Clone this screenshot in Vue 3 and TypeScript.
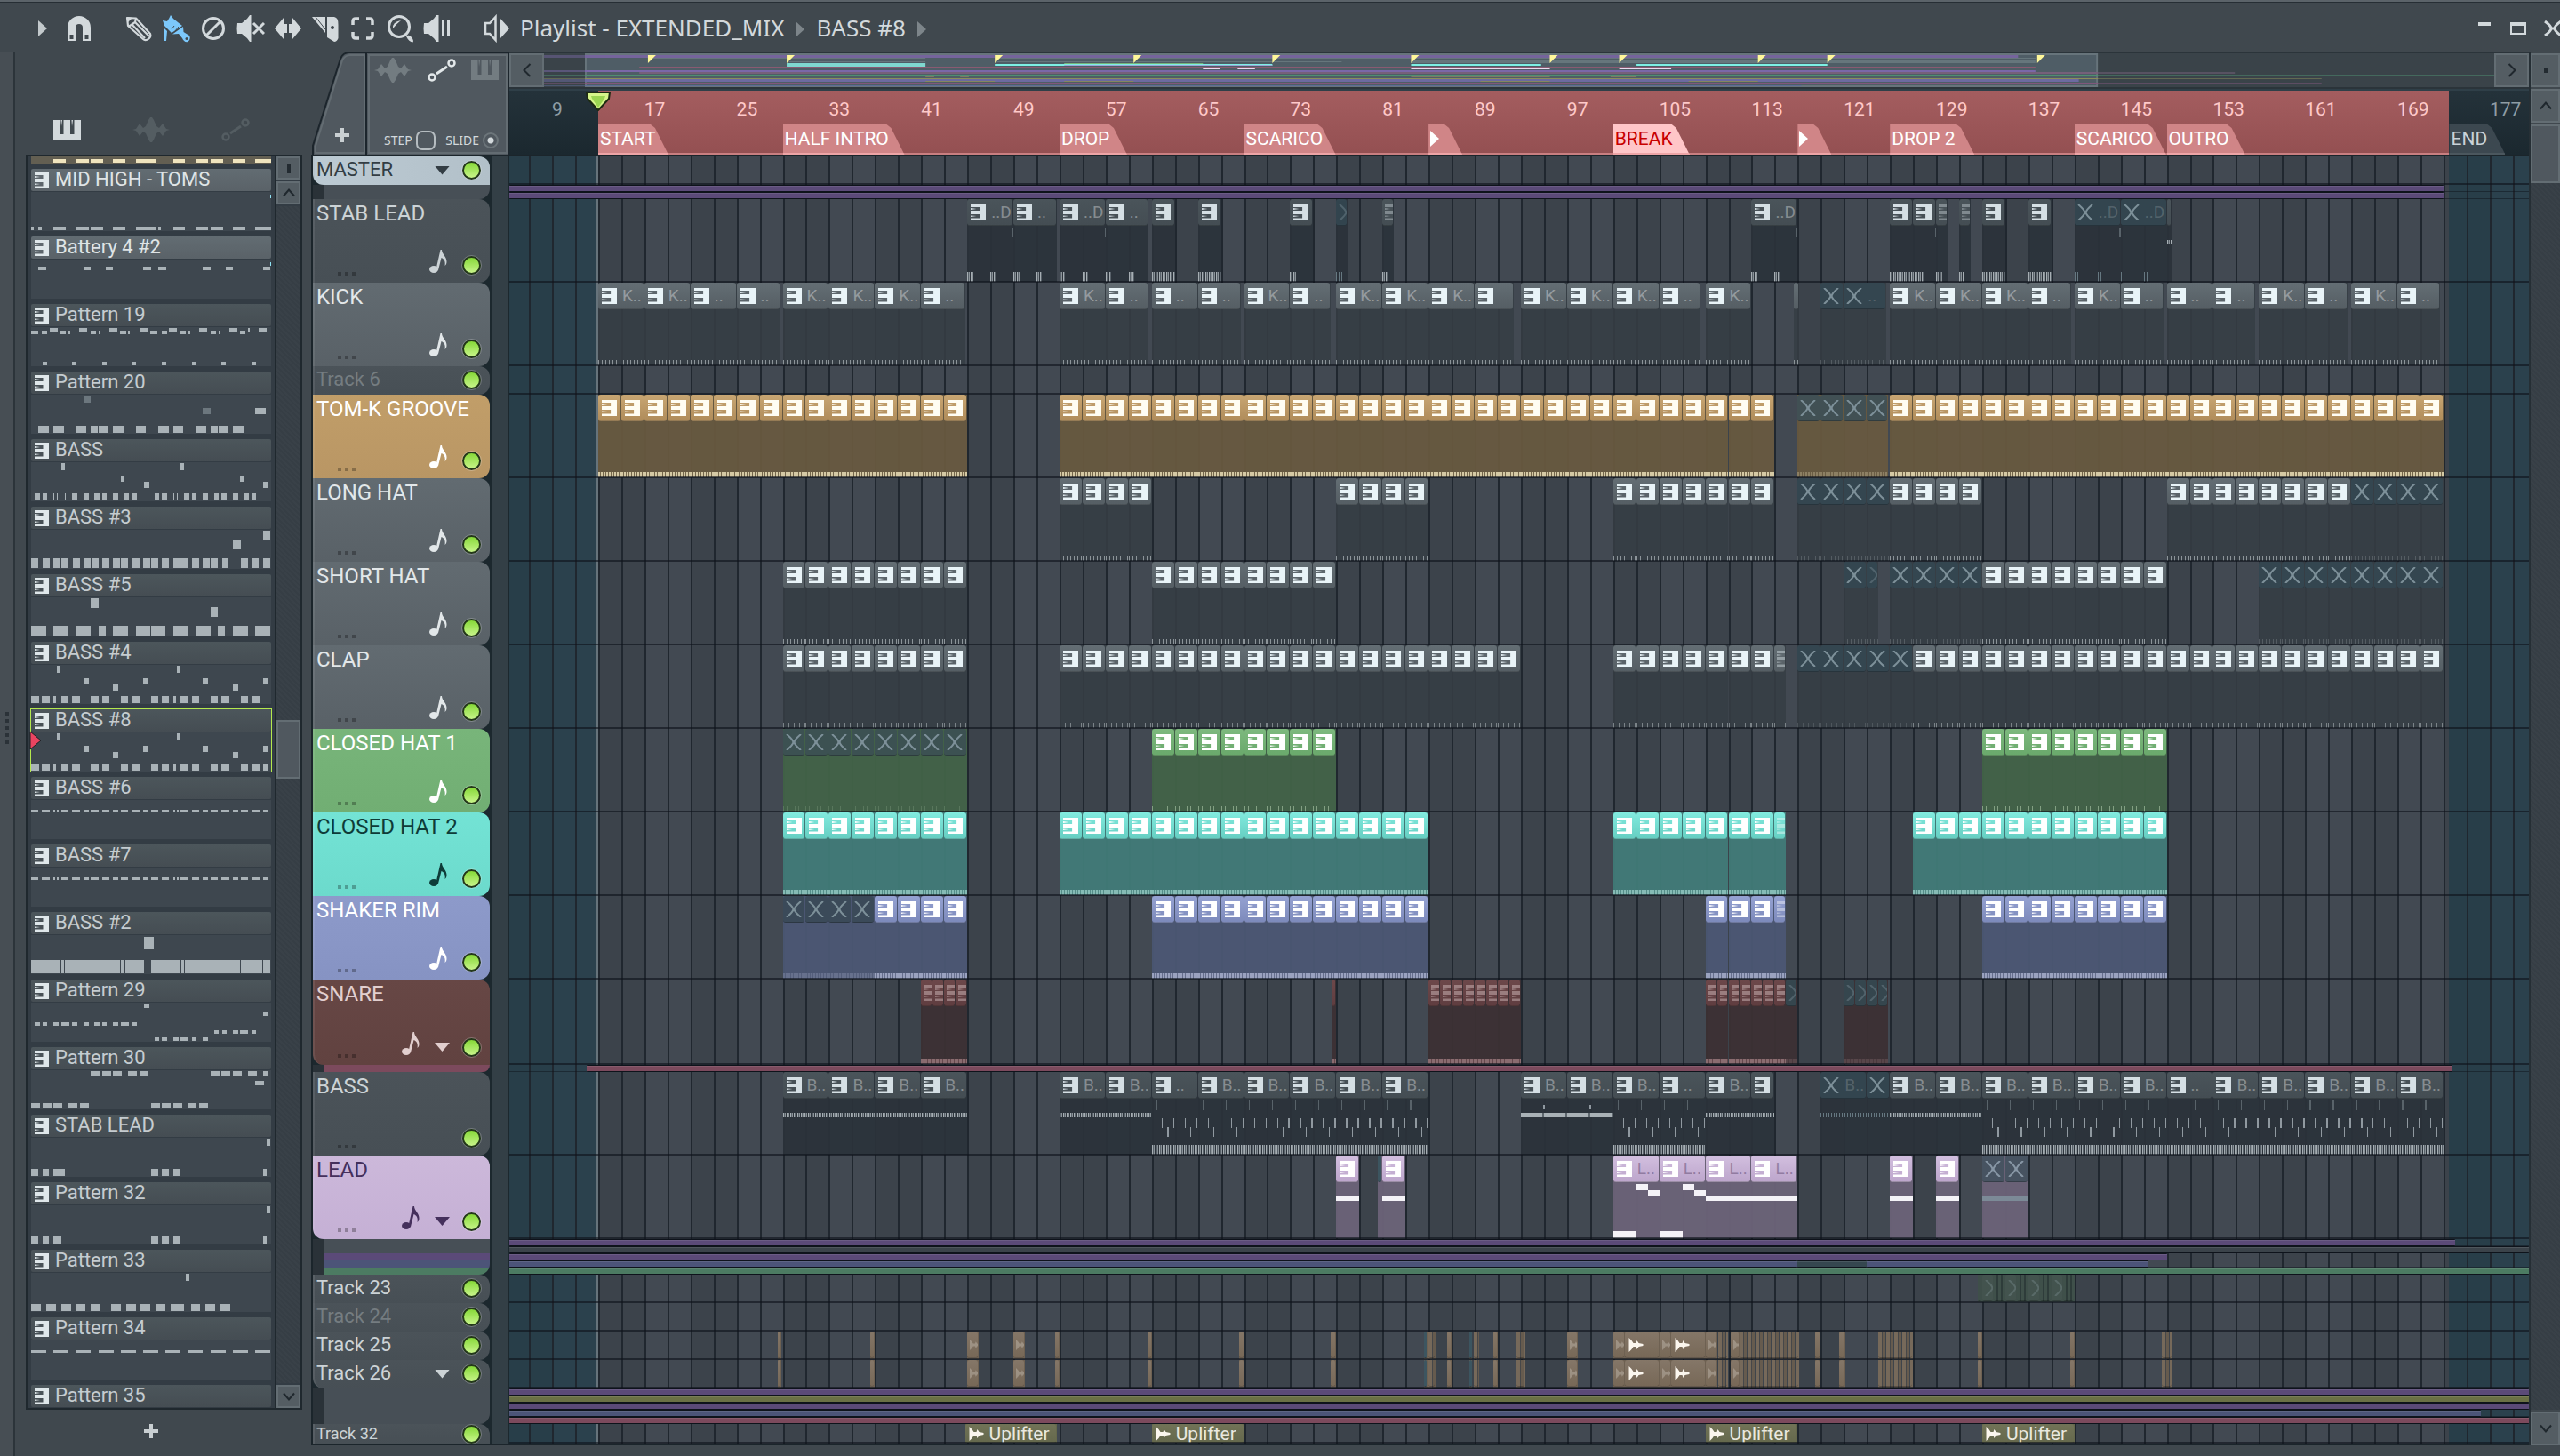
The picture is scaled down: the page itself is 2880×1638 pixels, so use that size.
<script setup lang="ts">
type Run = [start: number, end: number, step: number, kind: string, label?: string]
type Mark = [start: number, end: number, top: number, height: number, tone: string]
type Segment = [start: number, end: number, tone: string]

interface SubLane {
  tone: string
  segments: Segment[]
}

interface Track {
  name: string
  height: number
  theme: string
  dim?: boolean
  small?: boolean
  note?: boolean
  fold?: boolean
  runs?: Run[]
  marks?: Mark[]
  subs?: SubLane[]
}

interface Clip {
  start: number
  end: number
  kind: string
  label: string
}

const FIRST_BAR = 5.3
const BAR_SPAN = 175.1
const LAST_BAR = FIRST_BAR + BAR_SPAN

const at = (bar: number): string => `${((bar - FIRST_BAR) / BAR_SPAN) * 100}%`
const wide = (bars: number): string => `${(bars / BAR_SPAN) * 100}%`

function expand(runs: Run[] = []): Clip[] {
  const clips: Clip[] = []
  for (const [start, end, step, kind, label] of runs) {
    const size = step || end - start
    for (let b = start; b < end - 0.01; b += size) {
      clips.push({ start: b, end: Math.min(b + size, end), kind, label: label ?? '' })
    }
  }
  return clips
}

function bassRiff(start: number, end: number): Mark[] {
  const marks: Mark[] = [[start, end, 82, 11, 'comb']]
  for (let b = start; b < end; b += 2) {
    marks.push([b + 0.4, b + 0.5, 32, 11, 'faint'])
    marks.push([b + 0.85, b + 0.95, 52, 11, 'tick'])
    marks.push([b + 1.35, b + 1.45, 62, 11, 'tick'])
    marks.push([b + 1.85, b + 1.95, 52, 11, 'tick'])
  }
  return marks
}

function stabs(bars: number[], tone = 'comb'): Mark[] {
  return bars.map((b): Mark => [b, b + 0.5, 82, 11, tone])
}

function leadRiff(b: number): Mark[] {
  return [
    [b, b + 2, 85, 8, 'solid'],
    [b + 2, b + 3, 32, 7, 'solid'],
    [b + 3, b + 4, 39, 7, 'solid'],
  ]
}

const full = (tone: string): SubLane => ({ tone, segments: [[FIRST_BAR, LAST_BAR, tone]] })

const hits: Run[] = [
  [28.6, 28.9, 0, 's'], [36.6, 37, 0, 's'], [45, 46, 0, 'w'], [49, 50, 0, 'w'], [52.6, 53, 0, 's'],
  [60.6, 61, 0, 's'], [68.6, 69, 0, 's'], [76.5, 77, 0, 's'], [84.6, 84.9, 0, 'm'], [85, 85.6, 0, 't'],
  [86.6, 87, 0, 's'], [88.5, 88.8, 0, 'm'], [88.9, 89.4, 0, 't'], [90.6, 91, 0, 's'],
  [92.6, 93.4, 0, 't'], [97, 97.9, 0, 'w'], [101, 102, 0, 'w'], [102, 105, 0, 'a'], [105, 106, 0, 'w'],
  [106, 109, 0, 'a'], [109, 110, 0, 'w'], [110.1, 111, 0, 't'], [111.2, 112, 0, 'w'], [112, 117.1, 0, 't'],
  [118.5, 119, 0, 's'], [120.6, 121.1, 0, 's'], [124, 127, 0, 't'], [132.6, 133, 0, 's'],
  [140.6, 141, 0, 's'], [148.6, 149.5, 0, 't'],
]

const tracks: Track[] = [
  {
    name: 'MASTER', height: 32, theme: 'silver', small: true, fold: true,
    subs: [
      { tone: 'plain', segments: [[FIRST_BAR, 173, 'violet']] },
      { tone: 'plain', segments: [[FIRST_BAR, 173, 'violet']] },
    ],
  },
  {
    name: 'STAB LEAD', height: 94, theme: 'slate', note: true,
    runs: [
      [45, 49, 0, 'k', '..D'], [49, 52.8, 0, 'k', '..'], [53, 57, 0, 'k', '..D'], [57, 60.7, 0, 'k', '..'],
      [61, 63, 0, 'k'], [65, 67, 0, 'k'], [73, 75, 0, 'k'], [77, 78, 0, 'x'], [81, 82, 0, 'k'],
      [113, 117, 0, 'k', '..D'], [125, 129, 2, 'k'], [129, 130, 0, 'k'], [131, 132, 0, 'k'],
      [133, 135, 0, 'k'], [137, 139, 0, 'k'], [141, 149, 4, 'x', '..D'], [149, 149.4, 0, 's'],
    ],
    marks: [
      ...stabs([45, 47, 49, 51, 53, 55, 57, 59, 73, 81, 113, 115, 129, 131]),
      ...stabs([77, 141, 143, 145, 147], 'combdim'),
      [61, 63, 82, 11, 'comb'], [65, 67, 82, 11, 'comb'], [125, 128, 82, 11, 'comb'],
      [133, 135, 82, 11, 'comb'], [137, 139, 82, 11, 'comb'], [149, 149.4, 46, 5, 'comb'],
      [48.9, 49, 32, 11, 'faint'], [56.9, 57, 32, 11, 'faint'], [116.9, 117, 32, 11, 'faint'],
      [128.9, 129, 32, 11, 'faint'], [136.9, 137, 32, 11, 'faint'], [144.9, 145, 32, 11, 'faint'],
    ],
  },
  {
    name: 'KICK', height: 94, theme: 'gray', note: true,
    runs: [
      [13, 21, 4, 'k', 'K..'], [21, 25, 0, 'k', '..'], [25, 28.8, 0, 'k', '..'], [29, 41, 4, 'k', 'K..'],
      [41, 44.8, 0, 'k', '..'], [53, 57, 0, 'k', 'K..'], [57, 60.7, 0, 'k', '..'], [61, 65, 0, 'k', '..'],
      [65, 68.7, 0, 'k', '..'], [69, 73, 0, 'k', 'K..'], [73, 76.5, 0, 'k', '..'], [77, 89, 4, 'k', 'K..'],
      [89, 92.4, 0, 'k'], [93, 105, 4, 'k', 'K..'], [105, 108.6, 0, 'k', '..'], [109, 113, 0, 'k', 'K..'],
      [116.7, 117.1, 0, 's'], [119, 121, 0, 'x'], [121, 124.7, 0, 'x', '..'], [125, 137, 4, 'k', 'K..'],
      [137, 140.7, 0, 'k', '..'], [141, 145, 0, 'k', 'K..'], [145, 148.7, 0, 'k', '..'], [149, 153, 0, 'k', '..'],
      [153, 156.7, 0, 'k', '..'], [157, 161, 0, 'k', 'K..'], [161, 164.7, 0, 'k', '..'],
      [165, 169, 0, 'k', 'K..'], [169, 172.7, 0, 'k', '..'],
    ],
  },
  { name: 'Track 6', height: 32, theme: 'slate', small: true, dim: true },
  {
    name: 'TOM-K GROOVE', height: 94, theme: 'gold', note: true,
    runs: [[13, 45, 2, 'k'], [53, 115, 2, 'k'], [117, 123, 2, 'x'], [123, 124.8, 0, 'x'], [125, 173, 2, 'k']],
  },
  {
    name: 'LONG HAT', height: 94, theme: 'gray', note: true,
    runs: [
      [53, 61, 2, 'k'], [77, 85, 2, 'k'], [101, 115, 2, 'k'], [117, 125, 2, 'x'], [125, 133, 2, 'k'],
      [149, 165, 2, 'k'], [165, 173, 2, 'x'],
    ],
  },
  {
    name: 'SHORT HAT', height: 94, theme: 'gray', note: true,
    runs: [
      [29, 45, 2, 'k'], [61, 77, 2, 'k'], [121, 123, 0, 'x'], [123, 124, 0, 'x'], [125, 133, 2, 'x'],
      [133, 149, 2, 'k'], [157, 173, 2, 'x'],
    ],
  },
  {
    name: 'CLAP', height: 94, theme: 'gray sparse', note: true,
    runs: [[29, 45, 2, 'k'], [53, 93, 2, 'k'], [101, 116, 2, 'k'], [117, 127, 2, 'x'], [127, 173, 2, 'k']],
  },
  {
    name: 'CLOSED HAT 1', height: 94, theme: 'green', note: true,
    runs: [[29, 45, 2, 'x'], [61, 77, 2, 'k'], [133, 149, 2, 'k']],
  },
  {
    name: 'CLOSED HAT 2', height: 94, theme: 'aqua', note: true,
    runs: [[29, 45, 2, 'k'], [53, 85, 2, 'k'], [101, 116, 2, 'k'], [127, 149, 2, 'k']],
  },
  {
    name: 'SHAKER RIM', height: 94, theme: 'indigo', note: true,
    runs: [[29, 37, 2, 'x'], [37, 45, 2, 'k'], [61, 85, 2, 'k'], [109, 116, 2, 'k'], [133, 149, 2, 'k']],
  },
  {
    name: 'SNARE', height: 96, theme: 'brick', note: true, fold: true,
    runs: [
      [41, 45, 1, 'k'], [76.6, 77, 0, 's'], [85, 93, 1, 'k'], [109, 116, 1, 'k'], [116, 117, 0, 'x'],
      [121, 124.8, 1, 'x'],
    ],
    subs: [{ tone: 'rose', segments: [[12, 173.8, 'rose']] }],
  },
  {
    name: 'BASS', height: 94, theme: 'slate',
    runs: [
      [29, 45, 4, 'k', 'B..'], [53, 61, 4, 'k', 'B..'], [61, 65, 0, 'k', '..'], [65, 85, 4, 'k', 'B..'],
      [93, 105, 4, 'k', 'B..'], [105, 109, 0, 'k', '..'], [109, 113, 0, 'k', 'B..'], [113, 115, 0, 'k'],
      [119, 123, 0, 'x', 'B..'], [123, 125, 0, 'x'], [125, 149, 4, 'k', 'B..'], [149, 153, 0, 'k', '..'],
      [153, 173, 4, 'k', 'B..'],
    ],
    marks: [
      [29, 45, 46, 5, 'comb'], [53, 61, 46, 5, 'comb'], [93, 101, 46, 5, 'dash'],
      [94.9, 95.1, 37, 5, 'tick'], [98.9, 99.1, 37, 5, 'tick'],
      [109, 115, 46, 5, 'comb'], [119, 125, 46, 5, 'combdim'], [125, 133, 46, 5, 'comb'],
      ...bassRiff(61, 85), ...bassRiff(101, 109), ...bassRiff(133, 173),
    ],
  },
  {
    name: 'LEAD', height: 94, theme: 'lilac', note: true, fold: true,
    runs: [
      [77, 79, 0, 'k'], [80.6, 81, 0, 'm'], [81, 83, 0, 'k'], [101, 117, 4, 'k', 'L..'], [125, 127, 0, 'k'],
      [129, 131, 0, 'k'], [133, 137, 2, 'x'],
    ],
    marks: [
      [77, 79, 46, 5, 'solid'], [81, 83, 46, 5, 'solid'], [109, 117, 46, 5, 'solid'],
      [125, 127, 46, 5, 'solid'], [129, 131, 46, 5, 'solid'], [133, 137, 46, 5, 'mist'],
      ...leadRiff(101), ...leadRiff(105),
    ],
    subs: [
      { tone: 'plain', segments: [[FIRST_BAR, 174, 'violet']] },
      { tone: 'plain', segments: [[FIRST_BAR, LAST_BAR, 'plain']] },
      { tone: 'violet', segments: [[FIRST_BAR, 149, 'violet']] },
      { tone: 'steel', segments: [[FIRST_BAR, 117, 'steel'], [117, 123, 'deep'], [123, 147.4, 'steel']] },
      full('jade'),
    ],
  },
  {
    name: 'Track 23', height: 32, theme: 'moss', small: true,
    runs: [
      [132.6, 133, 0, 's'], [133, 134, 0, 'x'], [134, 135, 0, 't'], [135, 136, 0, 'x'], [136, 137, 0, 't'],
      [137, 138, 0, 'x'], [138, 139, 0, 't'], [139, 140, 0, 'x'], [140, 141, 0, 't'],
    ],
  },
  { name: 'Track 24', height: 32, theme: 'slate', small: true, dim: true },
  { name: 'Track 25', height: 32, theme: 'tan', small: true, runs: hits },
  {
    name: 'Track 26', height: 32, theme: 'tan', small: true, fold: true, runs: hits,
    subs: [
      { tone: 'plain', segments: [[FIRST_BAR, LAST_BAR, 'violet']] },
      { tone: 'plain', segments: [[FIRST_BAR, LAST_BAR, 'olive']] },
      { tone: 'plain', segments: [[FIRST_BAR, LAST_BAR, 'violet']] },
      { tone: 'plain', segments: [[FIRST_BAR, 176.2, 'steel']] },
      { tone: 'plain', segments: [[FIRST_BAR, LAST_BAR, 'rose']] },
    ],
  },
  {
    name: 'Track 32', height: 22, theme: 'khaki', small: true,
    runs: [
      [44.8, 52.8, 0, 'a', 'Uplifter'], [61, 69, 0, 'a', 'Uplifter'], [109, 117, 0, 'a', 'Uplifter'],
      [133, 141, 0, 'a', 'Uplifter'],
    ],
  },
]

const lanes = tracks.map((t) => ({ ...t, clips: expand(t.runs) }))

const blocks: { start: number; size: number; tone: string }[] = []
for (let b = 5; b < LAST_BAR; b += 4) {
  const start = Math.max(b, FIRST_BAR)
  blocks.push({ start, size: Math.min(b + 4, LAST_BAR) - start, tone: (b - 5) % 8 === 0 ? 'low' : 'high' })
}

const lines: number[] = []
for (let b = 7; b < LAST_BAR; b += 2) lines.push(b)

const numbers: number[] = []
for (let b = 9; b <= 177; b += 8) numbers.push(b)

const markers = [
  { bar: 13, width: 79, text: 'START', tone: '' },
  { bar: 29, width: 137, text: 'HALF INTRO', tone: '' },
  { bar: 53, width: 76, text: 'DROP', tone: '' },
  { bar: 69, width: 103, text: 'SCARICO', tone: '' },
  { bar: 85, width: 38, text: '', tone: '' },
  { bar: 101, width: 86, text: 'BREAK', tone: 'current' },
  { bar: 117, width: 38, text: '', tone: '' },
  { bar: 125, width: 95, text: 'DROP 2', tone: '' },
  { bar: 141, width: 103, text: 'SCARICO', tone: '' },
  { bar: 149, width: 88, text: 'OUTRO', tone: '' },
  { bar: 173.5, width: 63, text: 'END', tone: 'outside' },
]

const tools = [
  { id: 'i-pencil', label: 'Draw' },
  { id: 'i-brush', label: 'Paint' },
  { id: 'i-delete', label: 'Delete' },
  { id: 'i-mute', label: 'Mute' },
  { id: 'i-slip', label: 'Slip' },
  { id: 'i-slice', label: 'Slice' },
  { id: 'i-select', label: 'Select' },
  { id: 'i-zoom', label: 'Zoom' },
  { id: 'i-play', label: 'Playback' },
]

/* Each row of a pattern preview is "top height: from-to from-to ..." */
const bassTail = '0-9 12-21 25-28 34-42 46-55 67-76 80-88 101-109 113-122 135-143 147-155 160-163 168-176 181-189 202-210 214-223 236-244 248-257'
const bassTop = ['1 8: 29-32 164-167', '15 7: 59-65 126-132 193-199 261-266', '22 7: 92-98 227-233']
const pulse = '11 3: 0-8 12-21 25-27 29-31 34-42 46-55 59-65 67-76 80-88 92-98 101-109 113-122 126-132 135-143 147-155 160-162 164-166 168-176 181-189 193-199 202-210 214-223 227-233 236-244 248-257 261-266'

const patternSource: [string, string[]][] = [
  ['MID HIGH - TOMS', ['39 4: 0-3 8-12 25-39 50-65 67-81 92-106 118-141 143-146 160-173 185-199 202-216 227-241 252-270']],
  ['Battery 4 #2', ['8 4: 8-17 59-67 84-92 126-135 143-152 193-202 219-227 261-269']],
  ['Pattern 19', [
    '1 4: 21-30 54-63 88-97 122-131 155-164 189-198 223-232 244-246 256-265',
    '4 4: 0-8 12-18 33-39 42-44 67-73 76-78 100-107 109-111 134-142 147-153 168-174 177-179 202-208 211-213 235-241',
    '39 4: 13-18 46-51 80-85 113-118 147-152 181-186 214-219 248-253',
  ]],
  ['Pattern 20', [
    '1 8 dim: 59-67', '15 7 dim: 193-202', '15 7: 252-264',
    '35 8: 8-20 25-37 50-62 67-75 76-87 92-104 118-129 143-155 160-171 185-197 202-210 211-222 227-239',
  ]],
  ['BASS', [
    '1 8: 34-38 168-172', '15 7: 101-105 235-239', '22 7: 127-133 261-266',
    '35 8: 4-10 13-18 25-26 29-30 38-39 46-52 59-65 71-77 80-85 92-98 105-110 113-119 139-144 147-153 160-161 164-165 172-178 181-186 193-199 206-211 214-220 227-233 239-245 248-253',
  ]],
  ['BASS #3', [
    '1 11: 261-269', '11 11: 227-236',
    '32 11: 0-8 13-21 25-33 34-42 47-55 59-67 68-76 80-88 92-100 101-109 114-122 126-134 135-143 147-155 160-167 168-176 181-189 193-201 202-210 215-222 236-244 248-256 261-269',
  ]],
  ['BASS #5', [
    '1 11: 67-76', '11 11: 202-210',
    '32 11: 0-17 25-42 50-67 76-84 92-109 118-134 135-151 160-177 185-202 210-218 227-244 252-269',
  ]],
  ['BASS #4', [...bassTop, `35 8: ${bassTail}`]],
  ['BASS #8', [...bassTop, `35 8: ${bassTail} 261-266`]],
  ['BASS #6', [pulse]],
  ['BASS #7', [pulse]],
  ['BASS #2', ['2 14: 127-138', '28 15: 0-33 34-37 38-100 101-105 106-127 135-168 169-172 173-235 236-239 240-260 261-269']],
  ['Pattern 29', [
    '1 5: 127-133', '10 5: 261-266', '22 4: 4-10 13-18 25-31 34-43 46-52 59-65 71-77 80-85 92-98 101-110 113-119',
    '31 4: 206-211 215-220 227-233 235-244 248-253', '39 4: 139-144 147-153 160-166 168-176 181-186 193-199',
  ]],
  ['Pattern 30', [
    '1 6: 67-77 80-90 92-102 109-119 122-132 202-212 214-224 227-237 244-254 261-267', '12 5: 252-262',
    '37 6: 0-10 13-23 25-35 42-52 55-65 135-145 147-157 160-170 176-186 189-199',
  ]],
  ['STAB LEAD', ['1 8: 265-269', '35 8: 0-8 13-20 25-38 135-143 147-155 160-168 261-265']],
  ['Pattern 32', ['1 8: 265-269', '35 8: 0-8 13-20 25-34 135-143 147-155 160-168 261-265']],
  ['Pattern 33', [
    '1 8: 174-178', '35 8: 0-11 17-28 34-45 50-61 67-78 90-101 107-118 123-134 140-151 157-172 180-190 196-207 213-224',
  ]],
  ['Pattern 34', ['11 3: 0-17 25-42 50-67 76-93 101-118 126-143 151-168 176-193 202-219 227-244 252-269']],
  ['Pattern 35', []],
]

const patterns = patternSource.map(([name, rows]) => ({
  name,
  notes: rows.flatMap((row) => {
    const [spec, list] = row.split(': ')
    const [y, h, dim] = spec.split(' ')
    return list.split(' ').map((pair) => {
      const [a, b] = pair.split('-').map(Number)
      return { x: a, y: Number(y), w: b - a, h: Number(h), dim: dim === 'dim' }
    })
  }),
}))

const mini = (bar: number): number => 117 + (bar - 13) * 9.76
const miniRows: [number, number, string, number, number][] = [
  [2, 3, '#75649c', -20, 171], [21, 2, '#76607a', 12, 196], [19, 2, '#7a68a8', -20, 173],
  [24, 1, '#4f8f70', -20, 245], [28, 1, '#8b8d5a', -20, 206], [29, 3, '#6c6aa0', -20, 178],
  [33, 1, '#80577c', -20, 206], [36, 1, '#5c6b96', -20, 146], [15, 1, '#8a5a72', 12, 173],
  [7, 1, '#d6b27c', 13, 45], [7, 1, '#d6b27c', 53, 115], [7, 1, '#d6b27c', 117, 173],
  [5, 1, '#66767c', 13, 45], [5, 1, '#66767c', 53, 173],
  [9, 1, '#66767c', 29, 45], [8, 3, '#66767c', 101, 173], [9, 1, '#66767c', 53, 93],
  [11, 4, '#7fd8d0', 29, 45], [11, 1, '#78b27a', 61, 77], [12, 2, '#7df0e4', 53, 85],
  [12, 2, '#7df0e4', 101, 116], [12, 2, '#7df0e4', 127, 149], [13, 1, '#9aa6d8', 61, 85],
  [17, 1, '#e8dcf0', 77, 79], [17, 1, '#e8dcf0', 81, 83], [17, 1, '#e8dcf0', 101, 117],
  [17, 1, '#e8dcf0', 125, 131], [25, 2, '#7f7867', 45, 46], [25, 2, '#7f7867', 49, 50],
  [25, 2, '#7f7867', 101, 117], [25, 2, '#7f7867', 124, 127], [31, 1, '#85875e', 45, 53],
  [31, 1, '#85875e', 61, 69], [31, 1, '#85875e', 109, 117], [31, 1, '#85875e', 133, 141],
]
const miniFlags = [13, 29, 53, 69, 85, 101, 117, 125, 141, 149, 173.2]
</script>

<template>
  <svg class="defs" aria-hidden="true">
    <symbol id="i-keys" viewBox="0 0 16 18" preserveAspectRatio="none">
      <path fill="currentColor" d="M0 0H16V18H0V15.500H9.500V11H0V12.500L6 13L0 14V10.500V7.500H9.500V3H0V0ZM0 7H9.500V10.500H0ZM0 4L6 5L0 6Z" />
    </symbol>
    <symbol id="i-keysv" viewBox="0 0 31 22">
      <path fill="currentColor" d="M0 0H7.500V16H11.500V0H19V16H23.500V0H31V22H0Z" />
      <path fill="currentColor" d="M8.500 0H10L9 7ZM20.500 0H22L21 7Z" />
    </symbol>
    <symbol id="i-x" viewBox="0 0 18 18">
      <path fill="none" stroke="currentColor" stroke-width="2" d="M1 0Q8 6 8.500 9Q8 12 1 18M17 0Q10 6 9.500 9Q10 12 17 18M7.500 9H10.500" />
    </symbol>
    <symbol id="i-wave" viewBox="0 0 42 28">
      <path fill="currentColor" d="M0 14L4 13L8 7L12 12L15 10L18 3L20 0H22L24 3L27 10L30 12L34 7L38 13L42 14L38 15L34 21L30 16L27 18L24 25L22 28H20L18 25L15 18L12 16L8 21L4 15Z" />
    </symbol>
    <symbol id="i-auto" viewBox="0 0 32 26">
      <g fill="none" stroke="currentColor">
        <circle cx="5" cy="21" r="3.500" stroke-width="2.500" />
        <circle cx="27" cy="5" r="3.500" stroke-width="2.500" />
        <path stroke-width="3" d="M10 17L22 9" />
      </g>
    </symbol>
    <symbol id="i-note" viewBox="0 0 20 26">
      <ellipse cx="5" cy="22" rx="5" ry="4" fill="currentColor" />
      <path fill="currentColor" d="M7.500 22L12.500 0H14C14 5 20 8 19.500 14C19.400 16 18.500 17 17.500 18C18.500 13 16.500 10 13.500 9L10 23Z" />
    </symbol>
    <symbol id="i-sample" viewBox="0 0 16 16">
      <path fill="currentColor" d="M0 0L3 3L5 6H8L9 3L11 6L16 7V9L11 10L9 13L8 10H5L3 13L0 16Z" />
    </symbol>
    <symbol id="i-magnet" viewBox="0 0 32 32">
      <path fill="currentColor" fill-rule="evenodd" d="M3 30V15A13 13 0 0 1 29 15V30H20V15A4 4 0 0 0 12 15V30ZM5.500 23V28H9.500V23ZM22.500 23V28H26.500V23Z" />
    </symbol>
    <symbol id="i-pencil" viewBox="0 0 32 32">
      <g fill="none" stroke="currentColor" stroke-width="2.200" stroke-linejoin="round">
        <path d="M3 4L13 4.500L29 22Q30.500 26 26 28.500Q23 30 21 28L4 13Z" />
        <path d="M13 4.500L12 9L6 13L4 13M12 9L28 25M8.500 11.500L23 27" />
      </g>
      <path fill="currentColor" d="M3 3L9 4L4 9Z" />
    </symbol>
    <symbol id="i-brush" viewBox="0 0 32 32">
      <path fill="currentColor" d="M10 1L13 5L23 13L11 21L3 13L1 7L6 8L8 5ZM2 15L6 19L5 30L2 30ZM12 22.500L24 14L24.500 20L31 24Q33 28 29.500 31Q25 32 23 27L19 22Z" />
      <circle cx="28" cy="27.500" r="1.500" fill="#40484e" />
      <path stroke="#40484e" stroke-width="1" d="M11 17L14 13M15 19L19 14" />
    </symbol>
    <symbol id="i-delete" viewBox="0 0 32 32">
      <circle cx="16" cy="16" r="11.500" fill="none" stroke="currentColor" stroke-width="3" />
      <path stroke="currentColor" stroke-width="3" d="M8 24L24 8" />
    </symbol>
    <symbol id="i-mute" viewBox="0 0 32 32">
      <path fill="currentColor" d="M1 10H6L12 5L15 1H16.500V31H15L12 27L6 22H1Q0 16 1 10Z" />
      <path stroke="currentColor" stroke-width="3" d="M19 10L31 22M31 10L19 22" />
    </symbol>
    <symbol id="i-slip" viewBox="0 0 32 32">
      <path fill="currentColor" d="M1 16L11 4V11H15V21H11V28ZM31 16L21 4V11H17V21H21V28Z" />
    </symbol>
    <symbol id="i-slice" viewBox="0 0 32 32">
      <path fill="currentColor" fill-rule="evenodd" d="M1 3H16V21ZM18 3H26Q31 4 30.500 12V27Q29 31 26 31L18 26ZM24 13A2 2 0 1 0 24.010 13Z" />
      <path stroke="#40484e" stroke-width="1" d="M5 3L16 17" />
    </symbol>
    <symbol id="i-select" viewBox="0 0 32 32">
      <path fill="none" stroke="currentColor" stroke-width="3.500" d="M12 5H8Q5 5 5 8V12M20 5H24Q27 5 27 8V12M12 27H8Q5 27 5 24V20M20 27H24Q27 27 27 24V20" />
    </symbol>
    <symbol id="i-zoom" viewBox="0 0 32 32">
      <circle cx="15" cy="14" r="11.500" fill="none" stroke="currentColor" stroke-width="3" />
      <path fill="currentColor" d="M8 16Q7 9 17 7Q13 10 8 16ZM23 25Q26 22 29 26Q32 30 30.500 31.500Q26 31 23 25Z" />
    </symbol>
    <symbol id="i-play" viewBox="0 0 32 32">
      <path fill="currentColor" d="M1 10H6L12 5L15 1H17.500V31H15L12 27L6 22H1Q0 16 1 10ZM21 7H24V25H21ZM27 7H30V25H27Z" />
    </symbol>
    <symbol id="i-preview" viewBox="0 0 32 32">
      <path fill="none" stroke="currentColor" stroke-width="2.500" d="M14.500 3L8 10H3V22H8L14.500 29Z" />
      <path fill="currentColor" d="M20 5L30 16L20 27Z" />
    </symbol>
  </svg>

  <div class="window">
    <header class="titlebar">
      <button class="tool" aria-label="Menu"><svg class="tri" viewBox="0 0 10 18"><path d="M0 0L10 9L0 18Z" /></svg></button>
      <button class="tool" aria-label="Snap"><svg class="ico"><use href="#i-magnet" /></svg></button>
      <span class="space"></span>
      <button v-for="t in tools" :key="t.id" class="tool" :class="{ active: t.id === 'i-brush' }" :aria-label="t.label">
        <svg class="ico"><use :href="'#' + t.id" /></svg>
      </button>
      <span class="space"></span>
      <button class="tool" aria-label="Preview"><svg class="ico"><use href="#i-preview" /></svg></button>
      <nav class="crumbs">
        <span>Playlist - EXTENDED_MIX</span>
        <svg class="sep" viewBox="0 0 10 18"><path d="M0 0L10 9L0 18Z" /></svg>
        <span>BASS #8</span>
        <svg class="sep" viewBox="0 0 10 18"><path d="M0 0L10 9L0 18Z" /></svg>
      </nav>
      <div class="winbuttons">
        <button aria-label="Minimize"><svg viewBox="0 0 18 18"><path fill="currentColor" d="M2 2H16V6H2Z" /></svg></button>
        <button aria-label="Maximize"><svg viewBox="0 0 18 18"><path fill="currentColor" fill-rule="evenodd" d="M0 2H18V16H0ZM2 6V14H16V6Z" /></svg></button>
        <button aria-label="Close"><svg viewBox="0 0 18 18"><path fill="none" stroke="currentColor" stroke-width="3" d="M1 1Q8 6 8 9Q8 12 1 17M19 1Q12 6 12 9Q12 12 19 17M8 9H12" /></svg></button>
      </div>
    </header>

    <div class="main">
      <div class="edge"><i v-for="n in 5" :key="n"></i></div>

      <aside class="picker">
        <div class="tabs">
          <button class="on" aria-label="Patterns"><svg width="31" height="22"><use href="#i-keysv" /></svg></button>
          <button aria-label="Audio"><svg width="42" height="28"><use href="#i-wave" /></svg></button>
          <button aria-label="Automation"><svg width="32" height="26"><use href="#i-auto" /></svg></button>
        </div>
        <div class="pickbox">
          <div class="patterns">
            <div class="peek"><svg width="270" height="7"><path d="M25 3h14v4h-14zM50 3h15v4h-15zM67 3h14v4h-14zM92 3h14v4h-14zM118 3h22v4h-22zM160 3h13v4h-13zM185 3h14v4h-14zM202 3h14v4h-14zM227 3h14v4h-14zM252 3h18v4h-18z" fill="#efe4be" /></svg></div>
            <div v-for="(p, i) in patterns" :key="p.name + i" class="pattern" :class="{ selected: p.name === 'BASS #8', bright: i < 2 }">
              <div class="phead"><svg width="16" height="18"><use href="#i-keys" /></svg><span>{{ p.name }}</span></div>
              <svg class="pbody" width="270" height="44">
                <rect v-for="(n, k) in p.notes" :key="k" :x="n.x" :y="n.y" :width="n.w" :height="n.h" :fill="n.dim ? '#6c777e' : '#a9b2b7'" />
                <rect v-if="i < 2" x="269" y="3" width="1" height="4" fill="#8fe3f5" />
              </svg>
              <svg v-if="p.name === 'BASS #8'" class="playing" viewBox="0 0 14 22"><path d="M1 1L13 11L1 21Z" fill="#ea4460" stroke="#1c2024" stroke-width="1" /></svg>
            </div>
          </div>
          <div class="scroll">
            <button class="sb grip" aria-label="Toggle size"><i></i></button>
            <button class="sb up" aria-label="Scroll up"><svg viewBox="0 0 14 9"><path d="M1 8L7 1L13 8" /></svg></button>
            <div class="track"><div class="thumb"></div></div>
            <button class="sb up" aria-label="Scroll down"><svg viewBox="0 0 14 9"><path d="M1 1L7 8L13 1" /></svg></button>
          </div>
        </div>
        <button class="add" aria-label="Add pattern"><svg viewBox="0 0 16 16"><path d="M6 0H10V6H16V10H10V16H6V10H0V6H6Z" /></svg></button>
      </aside>

      <section class="playlist">
        <div class="left">
          <div class="corner">
            <svg class="cornerbg" viewBox="0 0 223 116">
              <path d="M2 118V106L33 8Q36 1 43 1H222V118Z" fill="#50585f" stroke="#1c252c" stroke-width="2" />
              <path d="M5 114V106L35 10Q38 4 44 4H60V114Z" fill="none" stroke="#636c72" stroke-width="2" />
              <path d="M62 1V116" stroke="#1c252c" stroke-width="2" />
              <path d="M65 4H220V114H65Z" fill="none" stroke="#636c72" stroke-width="2" />
            </svg>
            <button class="addtrack" aria-label="Add track"><svg viewBox="0 0 16 16"><path d="M6 0H10V6H16V10H10V16H6V10H0V6H6Z" /></svg></button>
            <div class="modes">
              <div class="kinds">
                <button aria-label="Audio clips"><svg width="42" height="28"><use href="#i-wave" /></svg></button>
                <button class="on" aria-label="Automation clips"><svg width="32" height="26"><use href="#i-auto" /></svg></button>
                <button aria-label="Pattern clips"><svg width="31" height="22"><use href="#i-keysv" /></svg></button>
              </div>
              <div class="opts">
                <label>STEP<input type="checkbox" /></label>
                <label>SLIDE<input type="radio" checked /></label>
              </div>
            </div>
          </div>
          <div class="heads">
            <template v-for="t in tracks" :key="t.name">
              <div class="head" :class="[t.theme, { small: t.small, dim: t.dim, open: t.subs }]" :style="{ height: t.height + 'px' }">
                <span class="name">{{ t.name }}</span>
                <div class="ctl">
                  <span v-if="!t.small" class="dots"><i></i><i></i><i></i></span>
                  <svg v-if="t.note" class="note"><use href="#i-note" /></svg>
                  <button v-if="t.fold" class="fold" aria-label="Collapse group"></button>
                  <button class="led" :aria-label="'Mute ' + t.name"></button>
                </div>
              </div>
              <div v-if="t.subs" class="kids">
                <div v-for="(s, i) in t.subs" :key="i" class="kid" :class="s.tone"></div>
              </div>
            </template>
          </div>
        </div>

        <div class="center">
          <div class="overview">
            <button class="sb" aria-label="Scroll left"><svg viewBox="0 0 9 16"><path d="M8 1L1 8L8 15" /></svg></button>
            <svg class="minimap" viewBox="0 0 2195 38" preserveAspectRatio="none">
              <rect width="2195" height="38" fill="#3a4349" />
              <rect x="47" y="1" width="1701" height="36" fill="#4f5d66" stroke="#67747b" stroke-width="2" />
              <rect v-for="(r, i) in miniRows" :key="i" :x="Math.max(0, mini(r[3]))" :y="r[0]" :width="mini(r[4]) - Math.max(0, mini(r[3]))" :height="r[1]" :fill="r[2]" />
              <rect width="46" height="38" fill="#3a4349" fill-opacity="0.500" />
              <rect x="1749" width="446" height="38" fill="#3a4349" fill-opacity="0.500" />
              <path v-for="f in miniFlags" :key="f" :d="`M${mini(f)} 2h9l-9 9z`" fill="#fff79a" />
            </svg>
            <button class="sb" aria-label="Scroll right"><svg viewBox="0 0 9 16"><path d="M1 1L8 8L1 15" /></svg></button>
          </div>

          <div class="ruler">
            <div class="selection" :style="{ left: at(13), width: wide(160.5) }"></div>
            <span v-for="n in numbers" :key="n" class="num" :class="{ out: n < 13 || n > 173 }" :style="{ left: at(n) }">{{ n }}</span>
            <div v-for="m in markers" :key="m.bar" class="marker" :class="m.tone" :style="{ left: at(m.bar), width: m.width + 'px' }">
              <b v-if="m.text">{{ m.text }}</b>
              <svg v-else class="mtri" viewBox="0 0 10 18"><path d="M0 0L10 9L0 18Z" /></svg>
            </div>
            <svg class="playhead" viewBox="0 0 32 22" :style="{ left: at(13) }">
              <path d="M3 1H29L28 8L16 21L4 8Z" fill="#d6f58a" stroke="#1d2a12" stroke-width="2" />
              <path d="M8 5H24L23 8L16 18L9 8Z" fill="#9bd552" />
            </svg>
          </div>

          <div class="lanes">
            <div class="grid">
              <div v-for="b in blocks" :key="b.start" class="block" :class="b.tone" :style="{ left: at(b.start), width: wide(b.size) }"></div>
              <div class="shade" :style="{ left: 0, width: wide(13 - FIRST_BAR) }"></div>
              <div class="shade" :style="{ left: at(173.5), right: 0 }"></div>
              <div v-for="l in lines" :key="l" class="line" :style="{ left: at(l) }"></div>
              <div class="cursor" :style="{ left: at(13) }"></div>
            </div>
            <template v-for="t in lanes" :key="t.name">
              <div class="lane" :class="[t.theme, { small: t.small }]" :style="{ height: t.height + 'px' }">
                <div v-for="(c, i) in t.clips" :key="i" class="clip" :class="['k-' + c.kind, { slim: c.end - c.start < 1.5 }]" :style="{ left: at(c.start), width: wide(c.end - c.start) }">
                  <div class="cap">
                    <svg v-if="c.kind === 'k'" class="ck"><use href="#i-keys" /></svg>
                    <svg v-else-if="c.kind === 'x'" class="cx"><use href="#i-x" /></svg>
                    <svg v-else-if="c.kind === 'a' || c.kind === 'w'" class="ca"><use href="#i-sample" /></svg>
                    <span v-if="c.label">{{ c.label }}</span>
                  </div>
                </div>
                <i v-for="(m, i) in t.marks" :key="'m' + i" class="mark" :class="m[4]" :style="{ left: at(m[0]), width: wide(m[1] - m[0]), top: m[2] + 'px', height: m[3] + 'px' }"></i>
              </div>
              <div v-for="(s, i) in t.subs" :key="t.name + i" class="sub">
                <div v-for="(g, k) in s.segments" :key="k" class="seg" :class="g[2]" :style="{ left: at(g[0]), width: wide(g[1] - g[0]) }"></div>
              </div>
            </template>
          </div>
        </div>

        <div class="vbar">
          <button class="sb grip" aria-label="Zoom"><i></i></button>
          <button class="sb" aria-label="Scroll up"><svg viewBox="0 0 14 9"><path d="M1 8L7 1L13 8" /></svg></button>
          <div class="track"><div class="thumb"></div></div>
          <button class="sb" aria-label="Scroll down"><svg viewBox="0 0 14 9"><path d="M1 1L7 8L13 1" /></svg></button>
        </div>
      </section>
    </div>
  </div>
</template>

<style>
body {
  background: #40484e;
}
</style>

<style scoped>
* {
  box-sizing: border-box;
}
.defs {
  position: absolute;
  width: 0;
  height: 0;
}
button {
  padding: 0;
  border: 0;
  background: none;
  color: inherit;
  font: inherit;
  display: flex;
  align-items: center;
  justify-content: center;
}
.window {
  display: flex;
  flex-direction: column;
  min-height: 100vh;
  overflow: hidden;
  background: #40484e;
  border-top: 2px solid #5b6369;
  color: #d3d9dc;
  font-family: Roboto, "Liberation Sans", sans-serif;
}

.titlebar {
  display: flex;
  align-items: center;
  height: 56px;
  padding: 2px 0 0 28px;
  border-top: 1px solid #262e34;
}
.tool {
  width: 42px;
  height: 34px;
}
.tool:first-child {
  width: 40px;
}
.tool.active {
  color: #7cc8fb;
}
.ico {
  width: 32px;
  height: 32px;
}
.tri {
  width: 10px;
  height: 18px;
  fill: #c3c9cc;
}
.space {
  width: 25px;
}
.crumbs {
  display: flex;
  align-items: center;
  gap: 13px;
  padding: 0 0 2px 5px;
  font-size: 26px;
  font-family: "Noto Sans", sans-serif;
}
.sep {
  width: 10px;
  height: 18px;
  margin-top: 4px;
  fill: #7d858a;
}
.winbuttons {
  display: flex;
  align-items: center;
  gap: 20px;
  margin-left: auto;
}
.winbuttons svg {
  width: 18px;
  height: 18px;
}

.main {
  display: flex;
  flex: 1;
  align-items: stretch;
}
.edge {
  display: flex;
  flex-direction: column;
  justify-content: center;
  align-items: center;
  gap: 4px;
  width: 17px;
  padding-bottom: 58px;
  border-right: 2px solid #2c343a;
  background: #474e54;
}
.edge i {
  width: 4px;
  height: 4px;
  background: #2b3238;
}

.picker {
  display: flex;
  flex-direction: column;
  width: 333px;
  flex: none;
  padding: 0 10px 0 12px;
}
.tabs {
  display: flex;
  align-items: center;
  gap: 58px;
  height: 116px;
  padding: 60px 0 0 31px;
  color: #545d62;
  flex: none;
}
.tabs .on {
  color: #d3d9dc;
}
.pickbox {
  display: flex;
  height: 1412px;
  border: 2px solid #1f282e;
  background: #333c44;
}
.patterns {
  width: 278px;
  padding: 0 4px;
  overflow: hidden;
}
.peek {
  height: 8px;
  margin-bottom: 6px;
  background: #635f52;
}
.peek svg {
  display: block;
}
.pattern {
  position: relative;
  width: 270px;
  height: 70px;
  margin-bottom: 6px;
}
.phead {
  display: flex;
  align-items: center;
  gap: 7px;
  height: 25px;
  padding-left: 4px;
  border-radius: 2px;
  background: linear-gradient(#4c565b, #454d53);
  color: #c5ccd0;
  font-size: 22px;
  line-height: 24px;
}
.phead svg {
  color: #dfe7ea;
}
.bright .phead {
  background: linear-gradient(#626c72, #5a6268);
  color: #dfe4e6;
}
.phead span {
  padding-bottom: 2px;
}
.pbody {
  display: block;
  margin-top: 1px;
  background: #3e474f;
}
.selected {
  outline: 1px solid #b4e94d;
}
.playing {
  position: absolute;
  left: -2px;
  top: 23px;
  width: 14px;
  height: 24px;
}
.scroll {
  display: flex;
  flex-direction: column;
  width: 29px;
  border-left: 2px solid #1f282e;
  gap: 2px;
}
.sb {
  flex: none;
  background: #545d63;
  border: 2px solid #636d73;
  color: #232b31;
}
.sb svg {
  width: 14px;
  height: 16px;
  fill: none;
  stroke: #20282e;
  stroke-width: 2;
}
.scroll .sb {
  height: 26px;
}
.grip i {
  width: 4px;
  height: 11px;
  background: #232b31;
}
.track {
  flex: 1;
  background: repeating-linear-gradient(45deg, #363e45 0 2px, #394148 2px 4px);
}
.thumb {
  background: #50585f;
  border: 2px solid #636d73;
}
.scroll .thumb {
  height: 66px;
  margin-top: 578px;
}
.add {
  height: 48px;
  width: 282px;
}
.add svg,
.addtrack svg {
  width: 16px;
  height: 16px;
  fill: #c9cfd2;
}

.playlist {
  display: flex;
  flex: 1;
  min-width: 0;
  align-items: stretch;
  margin-bottom: 12px;
}
.left {
  width: 223px;
  flex: none;
}
.corner {
  position: relative;
  display: flex;
  height: 116px;
}
.cornerbg {
  position: absolute;
  inset: 0;
  width: 223px;
  height: 116px;
}
.addtrack {
  position: relative;
  width: 62px;
  padding: 72px 0 0 8px;
}
.modes {
  position: relative;
  flex: 1;
  padding: 7px 12px 4px 9px;
  display: flex;
  flex-direction: column;
  justify-content: space-between;
}
.kinds {
  display: flex;
  align-items: center;
  justify-content: space-between;
  height: 28px;
  color: #737c81;
}
.kinds .on {
  color: #e3e8ea;
}
.opts {
  display: flex;
  justify-content: space-between;
  padding-left: 11px;
  font-family: "Noto Sans", sans-serif;
  font-size: 14px;
  line-height: 24px;
}
.opts label {
  display: flex;
  align-items: center;
  gap: 4px;
}
.opts input {
  appearance: none;
  margin: 0;
  width: 22px;
  height: 22px;
  border: 2px solid #b5bcc0;
  border-radius: 7px;
}
.opts input[type="radio"] {
  width: 18px;
  height: 18px;
  border: 2px solid #6c757a;
  border-radius: 50%;
  background: radial-gradient(circle, #d3d9dc 0 3px, transparent 4px);
}

.heads {
  width: 223px;
  border-top: 2px solid #1b252b;
  border-left: 2px solid #1b252b;
  border-bottom: 2px solid #1b252b;
  background: linear-gradient(90deg, #1c282e 0 202px, #333f46 202px 219px, #1c282e 219px);
}
.head {
  display: flex;
  flex-direction: column;
  justify-content: space-between;
  width: 199px;
  overflow: hidden;
  border-radius: 0 12px 12px 0;
  border-left: 2px solid rgba(255, 255, 255, 0.08);
}
.head.open {
  border-radius: 0 12px 0 12px;
}
.name {
  padding-left: 2px;
  font-size: 24px;
  line-height: 32px;
  white-space: nowrap;
}
.ctl {
  display: flex;
  align-items: center;
  height: 40px;
  padding: 0 10px 0 26px;
}
.head.small {
  flex-direction: row;
}
.small .name {
  font-size: 22px;
  line-height: 30px;
}
.small .ctl {
  height: 31px;
}
.head.khaki {
  border-radius: 0 12px 0 0;
}
.khaki .name {
  font-size: 18px;
  line-height: 22px;
}
.khaki .ctl {
  height: 22px;
  align-items: flex-end;
}
.dots {
  display: flex;
  gap: 4px;
  padding-top: 20px;
  margin-right: auto;
}
.dots i {
  width: 4px;
  height: 4px;
  background: rgba(0, 0, 0, 0.28);
}
.note {
  width: 20px;
  height: 26px;
  margin: 0 17px 8px 0;
}
.fold {
  width: 17px;
  height: 10px;
  margin-right: 14px;
  background: currentColor;
  clip-path: polygon(0 0, 100% 0, 50% 100%);
}
.led {
  flex: none;
  width: 21px;
  height: 21px;
  border: 2px solid #24381a;
  outline: 1px solid rgba(255, 255, 255, 0.25);
  border-radius: 50%;
  background: linear-gradient(#86d838, #c8f58a);
}
.head.silver { background: linear-gradient(90deg, #bccad3, #b2c0c9); color: #333d44; }
.head.slate, .head.moss, .head.tan, .head.khaki { background: linear-gradient(#4b5359, #474f55); color: #ccd3d6; }
.head.gray { background: linear-gradient(#626b71, #596167); color: #e2e7e9; }
.head.gold { background: linear-gradient(#c19e69, #b99664); color: #fff; }
.head.green { background: linear-gradient(#78b57a, #71ae73); color: #fff; }
.head.aqua { background: linear-gradient(#73e3d5, #6cdacc); color: #0e3b38; }
.head.indigo { background: linear-gradient(#8d9aca, #8693c3); color: #fff; }
.head.brick { background: linear-gradient(#674745, #614240); color: #e2cfcf; }
.head.lilac { background: linear-gradient(#ccb8da, #c5b0d5); color: #45305c; }
.head.dim { color: #757d81; }

.kids {
  padding-left: 12px;
  width: 199px;
  border-radius: 0 0 12px 0;
  overflow: hidden;
  background: #2a3238;
}
.kid {
  height: 8px;
}
.kid.plain { background: #474f56; }
.violet { background: #5b4a78; }
.steel { background: #4c5478; }
.jade { background: #4c7b62; }
.rose { background: #7c4a5d; }
.olive { background: #6a7045; }
.deep { background: #35474f; }

.center {
  display: flex;
  flex-direction: column;
  flex: 1;
  min-width: 0;
}
.overview {
  display: flex;
  height: 42px;
  padding: 2px 0;
  background: #2b343a;
}
.overview .sb {
  width: 39px;
  height: 38px;
}
.minimap {
  flex: 1;
  min-width: 0;
  height: 38px;
}
.ruler {
  position: relative;
  height: 74px;
  overflow: hidden;
  background: linear-gradient(#24323a, #1b282f);
  border-top: 2px solid #2f3f48;
}
.selection {
  position: absolute;
  top: -2px;
  bottom: 0;
  background: linear-gradient(#a45d5f, #945052);
  border-top: 2px solid #c87a7c;
  border-bottom: 2px solid #c97f81;
}
.num {
  position: absolute;
  top: 8px;
  font-size: 21px;
  line-height: 26px;
  color: #ffc9c9;
}
.num.out {
  color: #8f9da4;
}
.marker {
  position: absolute;
  bottom: 0;
  display: flex;
  align-items: center;
  height: 34px;
  padding-left: 2px;
  background: #d08587;
  border-bottom: 2px solid #eda4a6;
  clip-path: polygon(0 0, calc(100% - 20px) 0, calc(100% - 15px) 4px, 100% 100%, 0 100%);
  color: #fff;
}
.marker b {
  font-weight: 400;
  font-size: 21px;
  line-height: 30px;
  white-space: nowrap;
}
.marker.current {
  background: #ffc6c8;
  color: #c80000;
}
.marker.outside {
  background: #3c4850;
  border-color: #4b575e;
  color: #c9d2d7;
}
.mtri {
  width: 10px;
  height: 18px;
  fill: #fff;
}
.playhead {
  position: absolute;
  top: 1px;
  width: 32px;
  height: 22px;
  margin-left: -16px;
}

.lanes {
  position: relative;
  border-top: 2px solid #1b252b;
  border-bottom: 2px solid #1b252b;
  overflow: hidden;
}
.grid {
  position: absolute;
  inset: 0;
}
.block,
.shade,
.line,
.cursor {
  position: absolute;
  top: 0;
  bottom: 0;
}
.block.low { background: #3c434b; }
.block.high { background: #424952; }
.shade { background: rgba(20, 58, 72, 0.5); }
.line {
  width: 2px;
  background: #20272f;
}
.cursor {
  width: 2px;
  margin-left: -2px;
  background: #66737b;
}
.lane {
  position: relative;
  overflow: hidden;
}
.lane::after {
  content: "";
  position: absolute;
  inset: auto 0 0 0;
  height: 2px;
  background: rgba(14, 20, 27, 0.62);
}
.clip {
  position: absolute;
  top: 0;
  bottom: 1px;
  overflow: hidden;
  background: var(--body);
}
.clip::after {
  content: "";
  position: absolute;
  inset: auto 0 0 0;
  height: 6px;
  background: var(--comb);
}
.cap {
  position: relative;
  display: flex;
  align-items: center;
  gap: 6px;
  height: 30px;
  margin-right: 1px;
  padding-left: 4px;
  overflow: hidden;
  border-radius: 3px;
  background: var(--cap);
  border-bottom: 1px solid rgba(0, 0, 0, 0.25);
  color: rgba(255, 255, 255, 0.36);
  font-size: 19px;
  line-height: 28px;
  white-space: nowrap;
}
.ck {
  flex: none;
  width: 17px;
  height: 18px;
  color: var(--key);
}
.cx {
  flex: none;
  width: 18px;
  height: 18px;
  color: #7d9099;
}
.k-x .cap {
  background: var(--muted);
  color: rgba(255, 255, 255, 0.18);
  padding-left: 3px;
}
.k-x::after { opacity: 0.35; }
.k-m .cap { background: #3c5560; }
.slim .ck,
.slim .cx {
  opacity: 0.4;
}
.slim .cap { padding-left: 3px; }
.ca {
  flex: none;
  width: 17px;
  height: 16px;
  color: #fbf6ee;
}
.slate { --cap: linear-gradient(#4a545a, #444d53); --body: rgba(43, 51, 58, 0.93); --comb: none; --key: #d5dfe4; --muted: #33454f; }
.gray { --cap: linear-gradient(#646e74, #555e64); --body: rgba(54, 62, 68, 0.88); --comb: repeating-linear-gradient(90deg, #8c9499 0 1px, transparent 1px 4px); --key: #e9f4f8; --muted: #344650; }
.sparse { --comb: repeating-linear-gradient(90deg, #7b8388 0 1px, transparent 1px 6px); }
.gold { --cap: linear-gradient(#c8a673, #b08c5a); --body: rgba(104, 89, 64, 0.94); --comb: repeating-linear-gradient(90deg, #d5c9a4 0 2px, #75674c 2px 3px); --key: #fffdf3; --muted: #415054; }
.green { --cap: linear-gradient(#7db97e, #6aa96c); --body: rgba(66, 99, 72, 0.95); --comb: repeating-linear-gradient(90deg, #83a083 0 1px, transparent 1px 4px, #83a083 4px 5px, transparent 5px 13px); --key: #fff; --muted: #3c5152; }
.aqua { --cap: linear-gradient(#82ebdf, #66cec2); --body: rgba(65, 123, 120, 0.95); --comb: repeating-linear-gradient(90deg, #85bbb5 0 2px, #558e89 2px 3px); --key: #fff; --muted: #3a5358; }
.indigo { --cap: linear-gradient(#95a2d2, #7d8abb); --body: rgba(76, 87, 116, 0.95); --comb: repeating-linear-gradient(90deg, #9aa2bf 0 2px, #656e8c 2px 3px); --key: #fff; --muted: #3b4a59; }
.brick { --cap: linear-gradient(#6d484a, #5f3d40); --body: rgba(60, 48, 52, 0.95); --comb: repeating-linear-gradient(90deg, #8a6c70 0 3px, #65494d 3px 4px); --key: #e9d6d6; --muted: #36474f; }
.lilac { --cap: linear-gradient(#d2bfdf, #bda6cc); --body: rgba(107, 99, 120, 0.96); --comb: none; --key: #fff; --muted: #475361; }
.lilac .cap { color: rgba(60, 40, 80, 0.4); }
.lilac .k-x .cx { color: #8796a5; }
.moss { --cap: #3f4f4a; --body: #3f4f4a; --comb: none; --key: #fff; --muted: #44544f; }
.moss .cx { color: #7b8d90; }
.moss .k-t .cap { background: repeating-linear-gradient(90deg, #3f504a 0 3px, #2e3c3a 3px 5px); }
.tan { --cap: linear-gradient(#857768, #776857); --body: #6e6152; --comb: none; --key: #fff; --muted: #444; }
.tan .k-t,
.tan .k-t .cap { background: repeating-linear-gradient(90deg, #76695a 0 4px, #464749 4px 5px, #665b4e 5px 8px, #3e444b 8px 9px); }
.tan .slim .ca { opacity: 0.25; width: 12px; }
.khaki { --cap: linear-gradient(#717357, #65684c); --body: #65684c; --comb: none; --key: #fff; --muted: #444; }
.khaki .cap { height: 22px; color: #e9e8df; font-size: 21px; line-height: 22px; gap: 6px; }

.mark { position: absolute; }
.comb { background: repeating-linear-gradient(90deg, #a6aeb3 0 1px, #59626a 1px 2px, #8b9399 2px 3px, transparent 3px 4px); }
.combdim { background: repeating-linear-gradient(90deg, #667881 0 1px, transparent 1px 3px); }
.dash { background: repeating-linear-gradient(90deg, #a9b1b6 0 24px, #5e676e 24px 26px); }
.faint { background: #59636a; }
.tick { background: #9099a0; }
.solid { background: #f4f2f7; }
.mist { background: #7c8a97; }

.sub {
  position: relative;
  height: 8px;
  border-bottom: 1px solid rgba(14, 20, 27, 0.5);
}
.seg {
  position: absolute;
  top: 0;
  height: 8px;
  border-top: 1px solid #0e131b;
  border-bottom: 1px solid #0e131b;
  border-radius: 1px;
  box-shadow: inset 0 1px 0 rgba(255, 255, 255, 0.1);
}
.seg.plain { background: #3b434a; }

.vbar {
  display: flex;
  flex-direction: column;
  gap: 2px;
  width: 35px;
  flex: none;
  padding-top: 2px;
  border-left: 2px solid #262f35;
}
.vbar .sb {
  height: 38px;
}
.vbar .grip i {
  height: 6px;
}
.vbar .thumb {
  height: 66px;
}
</style>
